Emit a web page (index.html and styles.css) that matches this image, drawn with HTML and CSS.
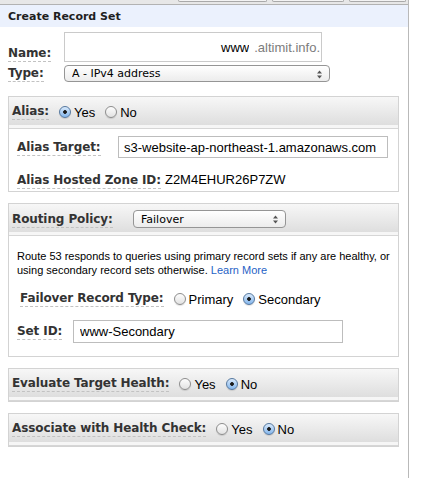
FILE: index.html
```html
<!DOCTYPE html>
<html lang="en">
  <head>
    <meta charset="UTF-8" />
    <meta name="viewport" content="width=device-width, initial-scale=1.0" />
    <title>Create Record Set</title>
    <link rel="stylesheet" href="styles.css">
  </head>
  <body>
    <div class="dialog">
      <!-- bottom edge of the toolbar buttons above -->
      <div class="toolbar">
        <span class="tool-btn btn-wide"></span>
        <span class="tool-btn btn-mid"></span>
        <span class="tool-btn btn-small"></span>
      </div>

      <h1 class="dialog-title">Create Record Set</h1>

      <form class="record-form" action="">
        <div class="row row-name">
          <div class="key key-top"><label class="field-label" for="name">Name:</label></div>
          <div class="name-box">
            <input type="text" id="name" class="name-input" value="www" />
            <span class="name-suffix">.altimit.info.</span>
          </div>
        </div>

        <div class="row row-type">
          <div class="key key-top"><label class="field-label" for="type">Type:</label></div>
          <div class="select-wrap type-select">
            <select id="type">
              <option>A - IPv4 address</option>
            </select>
            <svg class="select-arrows" width="5" height="9" viewBox="0 0 5 9">
              <path d="M0 3.5 L2.5 0.5 L5 3.5 Z M0 5.5 L5 5.5 L2.5 8.5 Z" fill="#555" />
            </svg>
          </div>
        </div>

        <!-- alias -->
        <div class="panel panel-alias">
          <div class="panel-head">
            <span class="field-label">Alias:</span>
            <label class="choice"><input type="radio" name="alias" checked />Yes</label>
            <label class="choice"><input type="radio" name="alias" />No</label>
          </div>
          <div class="panel-body alias-body">
            <div class="row row-center">
              <div class="key key-alias"><label class="field-label" for="target">Alias Target:</label></div>
              <input type="text" id="target" class="text-input alias-input" value="s3-website-ap-northeast-1.amazonaws.com" />
            </div>
            <div class="row row-zone">
              <span class="field-label">Alias Hosted Zone ID:</span>
              <span class="zone-id">Z2M4EHUR26P7ZW</span>
            </div>
          </div>
        </div>

        <!-- routing -->
        <div class="panel">
          <div class="panel-head">
            <div class="key key-routing"><label class="field-label" for="policy">Routing Policy:</label></div>
            <div class="select-wrap policy-select">
              <select id="policy">
                <option>Failover</option>
              </select>
              <svg class="select-arrows" width="5" height="9" viewBox="0 0 5 9">
                <path d="M0 3.5 L2.5 0.5 L5 3.5 Z M0 5.5 L5 5.5 L2.5 8.5 Z" fill="#555" />
              </svg>
            </div>
          </div>
          <div class="panel-body routing-body">
            <p class="note">
              Route 53 responds to queries using primary record sets if any are healthy, or<br />
              using secondary record sets otherwise. <a href="#">Learn More</a>
            </p>
            <div class="row row-center row-failover">
              <span class="field-label">Failover Record Type:</span>
              <label class="choice"><input type="radio" name="failover" />Primary</label>
              <label class="choice"><input type="radio" name="failover" checked />Secondary</label>
            </div>
            <div class="row row-center row-setid">
              <div class="key key-setid"><label class="field-label" for="setid">Set ID:</label></div>
              <input type="text" id="setid" class="text-input setid-input" value="www-Secondary" />
            </div>
          </div>
        </div>

        <div class="panel">
          <div class="panel-head">
            <span class="field-label">Evaluate Target Health:</span>
            <label class="choice"><input type="radio" name="evaluate" />Yes</label>
            <label class="choice"><input type="radio" name="evaluate" checked />No</label>
          </div>
        </div>

        <div class="panel">
          <div class="panel-head">
            <span class="field-label">Associate with Health Check:</span>
            <label class="choice"><input type="radio" name="check" />Yes</label>
            <label class="choice"><input type="radio" name="check" checked />No</label>
          </div>
        </div>
      </form>
    </div>
  </body>
</html>
```

FILE: styles.css
```css
* {
  margin: 0;
  padding: 0;
  box-sizing: border-box;
}
body {
  background: #fff;
  color: #000;
  font-family: "Liberation Sans", Arial, sans-serif;
  font-size: 13px;
}
.dialog {
  width: 409px;
  min-height: 478px;
  border-right: 1px solid #b9b9b9;
}

/* toolbar strip */
.toolbar {
  height: 5px;
  display: flex;
  justify-content: flex-end;
  gap: 5px;
  padding-right: 2px;
  background: #e7e7e7;
  border-bottom: 1px solid #b2b2b2;
}
.tool-btn {
  height: 2px;
  background: #f3f3f3;
  border: 1px solid #a9a9a9;
  border-top: 0;
  border-radius: 0 0 4px 4px;
}
.btn-wide {
  width: 89px;
}
.btn-mid {
  width: 72px;
}
.btn-small {
  width: 57px;
}

.dialog-title {
  height: 22px;
  padding: 1px 0 0 8px;
  background: #ebf1fd;
  color: #1f1f1f;
  font: bold 11px/21px "DejaVu Sans", Verdana, sans-serif;
}

.record-form {
  padding: 0 9px 0 8px;
}
.row {
  display: flex;
}
.row-center {
  align-items: center;
}
.field-label {
  display: inline-block;
  padding-bottom: 1px;
  border-bottom: 1px dashed #c2c2c2;
  color: #333;
  font: bold 12px/14px "DejaVu Sans", Verdana, sans-serif;
  letter-spacing: -0.1px;
  white-space: nowrap;
}
.key {
  flex: none;
}
.key-top {
  width: 56px;
}
.key-alias {
  width: 101px;
}
.key-routing {
  width: 121px;
}
.key-setid {
  width: 56px;
}

/* name + type */
.row-name {
  margin-top: 5px;
  align-items: flex-end;
}
.row-type {
  margin-top: 3px;
  align-items: flex-end;
}
.name-box {
  width: 258px;
  height: 30px;
  display: flex;
  align-items: center;
  padding-right: 1px;
  border: 1px solid #cacaca;
}
.name-input {
  flex: 1;
  min-width: 0;
  height: 100%;
  border: 0;
  outline: none;
  background: transparent;
  text-align: right;
  font: 13px "Liberation Sans", Arial, sans-serif;
  color: #000;
}
.name-suffix {
  margin-left: 5px;
  color: #7c7c7c;
}

.select-wrap {
  position: relative;
}
.select-wrap select {
  -webkit-appearance: none;
  appearance: none;
  width: 100%;
  height: 100%;
  padding: 0 0 0 7px;
  border: 1px solid #959595;
  border-radius: 4px;
  background: linear-gradient(#ffffff, #ececec);
  color: #000;
  font: 11px "DejaVu Sans", "Lucida Grande", sans-serif;
}
.select-arrows {
  position: absolute;
  right: 8px;
  top: 50%;
  margin-top: -4px;
}
.type-select {
  width: 266px;
  height: 17px;
}
.policy-select {
  width: 153px;
  height: 18px;
}

/* grouped sections */
.panel {
  margin-top: 11px;
  border: 1px solid #d3d3d3;
}
.panel-alias {
  margin-top: 14px;
}
.panel-head {
  height: 32px;
  display: flex;
  align-items: center;
  padding: 2px 0 3px 3px;
  border-bottom: 1px solid #d6d6d6;
  background: linear-gradient(#f7f7f7, #dedede) top / 100% 28px no-repeat, #f6f6f6;
}
.panel-body {
  padding: 0 8px;
}

.choice {
  display: flex;
  align-items: center;
  gap: 3px;
  margin-left: 10px;
  font-size: 13px;
}
.choice input {
  -webkit-appearance: none;
  appearance: none;
  width: 12px;
  height: 12px;
  border: 1px solid #8d8d8d;
  border-radius: 50%;
  background: linear-gradient(#fdfdfd, #e2e2e2);
  box-shadow: 0 1px 1px rgba(0, 0, 0, 0.12);
}
.choice input:checked {
  border-color: #56789f;
  background: radial-gradient(circle, #1a1a1a 0 1.5px, transparent 2.2px),
    linear-gradient(#d8e9fb, #84b6ec);
}

.text-input {
  padding: 0 5px;
  border: 1px solid #bdbdbd;
  outline: none;
  color: #000;
  font: 13px "Liberation Sans", Arial, sans-serif;
}

.alias-body {
  padding-top: 7px;
  padding-bottom: 2px;
}
.alias-input {
  width: 270px;
  height: 22px;
}
.row-zone {
  margin-top: 14px;
  align-items: baseline;
  gap: 4px;
}

.routing-body {
  padding-top: 13px;
  padding-bottom: 13px;
}
.note {
  font-size: 11px;
  line-height: 14px;
}
.note a {
  color: #1f63c6;
  text-decoration: none;
}
.row-failover {
  margin-top: 14px;
  padding-left: 3px;
}
.row-setid {
  margin-top: 13px;
}
.setid-input {
  width: 270px;
  height: 23px;
  padding-left: 6px;
}
```
